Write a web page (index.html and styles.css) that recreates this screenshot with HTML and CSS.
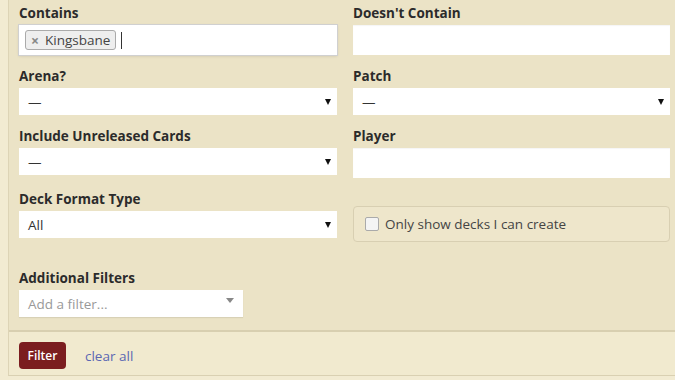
FILE: index.html
```html
<!DOCTYPE html>
<html>
<head>
<meta charset="utf-8">
<link rel="stylesheet" href="styles.css">
</head>
<body>
<div class="panel">
  <div class="filters">
    <div class="grid">
      <div class="field">
        <label class="lbl">Contains</label>
        <div class="input focus">
          <span class="tag"><span class="x">×</span>Kingsbane</span>
          <span class="caret"></span>
        </div>
      </div>
      <div class="field">
        <label class="lbl">Doesn't Contain</label>
        <div class="input"></div>
      </div>
      <div class="field">
        <label class="lbl">Arena?</label>
        <div class="select"><span>—</span><span class="arrow"></span></div>
      </div>
      <div class="field">
        <label class="lbl">Patch</label>
        <div class="select"><span>—</span><span class="arrow"></span></div>
      </div>
      <div class="field">
        <label class="lbl">Include Unreleased Cards</label>
        <div class="select"><span>—</span><span class="arrow"></span></div>
      </div>
      <div class="field">
        <label class="lbl">Player</label>
        <div class="input"></div>
      </div>
      <div class="field">
        <label class="lbl">Deck Format Type</label>
        <div class="select"><span>All</span><span class="arrow"></span></div>
      </div>
      <div class="field">
        <div class="checkwrap"><span class="box"></span><span>Only show decks I can create</span></div>
      </div>
    </div>
    <div class="additional">
      <label class="lbl">Additional Filters</label>
      <div class="select small"><span class="ph">Add a filter...</span><span class="arrow grey"></span></div>
    </div>
  </div>
  <div class="footer">
    <button class="btn">Filter</button>
    <a class="clear">clear all</a>
  </div>
</div>
</body>
</html>
```
FILE: styles.css
```css
html, body {
  margin: 0;
  padding: 0;
  background: #f2ebd2;
  font-family: "Open Sans", "Liberation Sans", sans-serif;
  color: #333;
}
.panel {
  margin-left: 8px;
  border-left: 1px solid #ddd4b6;
  height: 375px;
  border-bottom: 1px solid #d9d0b2;
  background: #f1eacf;
}
.filters {
  background: #ebe3c6;
  padding: 3px 0 13px 10px;
  border-bottom: 2px solid #d8cfb0;
}
.grid {
  display: grid;
  grid-template-columns: 318px 317px;
  column-gap: 16px;
  row-gap: 11px;
}
.field {
  display: flex;
  flex-direction: column;
}
.lbl {
  display: block;
  font-weight: bold;
  font-size: 13.5px;
  line-height: 20px;
  margin-bottom: 2px;
  color: #2b2b2b;
}
.input {
  height: 30px;
  background: #fff;
  box-sizing: border-box;
  display: flex;
  align-items: center;
  box-shadow: inset 0 1px 1px rgba(0,0,0,0.04);
}
.input.focus {
  box-shadow: 0 0 0 1px #d0d0d0, 0 1px 3px rgba(0,0,0,0.15);
  padding-left: 6px;
}
.tag {
  display: inline-flex;
  align-items: center;
  height: 20px;
  box-sizing: border-box;
  border: 1px solid #aaa;
  border-radius: 3px;
  background: #eeeeee;
  padding: 0 5px 0 5px;
  font-size: 13.5px;
  color: #444;
}
.tag .x {
  font-weight: bold;
  color: #888;
  font-size: 14px;
  margin-right: 6px;
}
.caret {
  display: inline-block;
  width: 1px;
  height: 17px;
  background: #333;
  margin-left: 5px;
}
.select {
  height: 27px;
  background: #fff;
  display: flex;
  align-items: center;
  justify-content: space-between;
  padding: 0 6px 0 9px;
  font-size: 13.5px;
  color: #333;
}
.arrow {
  width: 0;
  height: 0;
  border-left: 3.5px solid transparent;
  border-right: 3.5px solid transparent;
  border-top: 6px solid #111;
}
.arrow.grey {
  border-top-color: #888;
  border-left-width: 4px;
  border-right-width: 4px;
  border-top-width: 5px;
  margin-top: -6px;
}
.select.small {
  width: 224px;
  box-sizing: border-box;
  padding-right: 9px;
  box-shadow: 0 1px 1px rgba(0,0,0,0.08);
}
.ph {
  color: #999;
}
.checkwrap {
  margin-top: 17px;
  height: 36px;
  box-sizing: border-box;
  border: 1px solid #d8cfb2;
  border-radius: 4px;
  background: #eee6cb;
  display: flex;
  align-items: center;
  padding-left: 11px;
  font-size: 13.5px;
  color: #444;
}
.box {
  width: 12px;
  height: 12px;
  border: 1px solid #aaa;
  border-radius: 2px;
  background: #f4f4f4;
  margin-right: 6px;
}
.additional {
  margin-top: 26px;
}
.footer {
  display: flex;
  align-items: center;
  padding: 10px 0 0 10px;
  gap: 19px;
}
.btn {
  height: 27px;
  width: 47px;
  border: none;
  border-radius: 4px;
  background: #7b1d1f;
  color: #fff;
  font-family: "Open Sans", "Liberation Sans", sans-serif;
  font-size: 12px;
  font-weight: 600;
  padding: 0;
}
.clear {
  color: #5b67b3;
  font-size: 13.5px;
}
```
